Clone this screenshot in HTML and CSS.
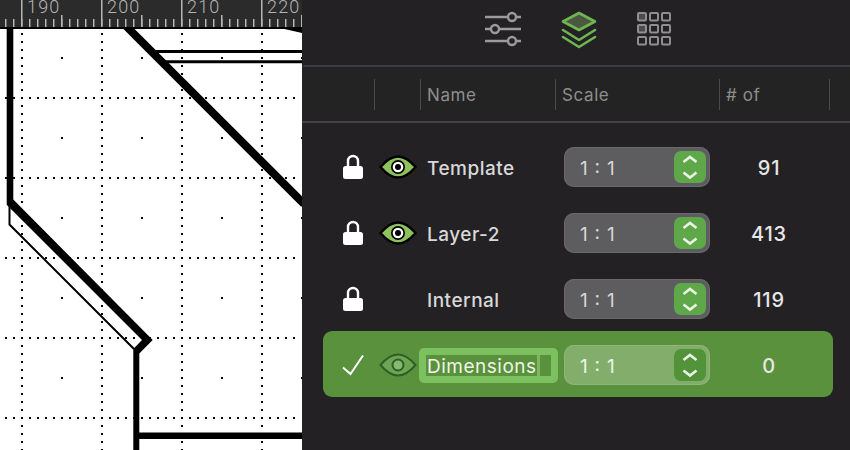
FILE: index.html
```html
<!DOCTYPE html>
<html lang="en">
<head>
    <meta charset="UTF-8">
    <meta name="viewport" content="width=device-width, initial-scale=1.0">
    <title>Layers</title>
    <link rel="stylesheet" href="styles.css">
</head>
<body>

    <div class="app">
        <svg class="drawing" width="302" height="450" viewBox="0 0 302 450">
            <defs>
                <pattern id="centerDots" width="80" height="80" patternUnits="userSpaceOnUse">
                    <rect x="61" y="57" width="2" height="2" fill="#000"/>
                </pattern>
            </defs>

            <rect width="302" height="450" fill="#fff"/>
            <rect y="28" width="302" height="422" fill="url(#centerDots)"/>

            <!-- grid -->
            <g stroke="#000" stroke-width="2" stroke-dasharray="2 6">
                <line x1="22" y1="33" x2="22" y2="450"/>
                <line x1="102" y1="33" x2="102" y2="450"/>
                <line x1="182" y1="33" x2="182" y2="450"/>
                <line x1="262" y1="33" x2="262" y2="450"/>
                <line x1="5" y1="98" x2="296" y2="98"/>
                <line x1="5" y1="178" x2="296" y2="178"/>
                <line x1="5" y1="258" x2="296" y2="258"/>
                <line x1="5" y1="338" x2="296" y2="338"/>
                <line x1="5" y1="418" x2="296" y2="418"/>
            </g>

            <!-- shapes -->
            <polygon points="6.7,28 13.3,28 13.3,199.5 152.7,340 139.3,353.5 139.3,450 133.3,450 133.3,349 142,340 6.7,204.7" fill="#000"/>
            <g fill="none" stroke="#000">
                <polyline points="9.5,204 9.5,224.5 134,349" stroke-width="2"/>
                <line x1="126" y1="26" x2="304" y2="204" stroke-width="8"/>
                <line x1="150" y1="51.5" x2="302" y2="51.5" stroke-width="3"/>
                <line x1="160" y1="61.7" x2="302" y2="61.7" stroke-width="3"/>
                <line x1="136" y1="435.7" x2="302" y2="435.7" stroke-width="6.5"/>
            </g>
            <polygon points="280,28 302,28 302,33" fill="#000"/>

            <!-- ruler -->
            <rect width="302" height="28" fill="#2b2b2b"/>
            <rect y="27" width="302" height="2" fill="#000"/>
            <g stroke="#b5b5b5">
                <line x1="5" y1="23" x2="302" y2="23" stroke-width="8" stroke-dasharray="1.5 6.5"/>
                <line x1="61" y1="21" x2="302" y2="21" stroke-width="12" stroke-dasharray="1.5 78.5"/>
                <line x1="21" y1="13" x2="302" y2="13" stroke-width="26" stroke-dasharray="1.5 78.5"/>
            </g>
            <g class="ruler-text">
                <text x="27" y="12.7">190</text>
                <text x="107" y="12.7">200</text>
                <text x="187" y="12.7">210</text>
                <text x="267" y="12.7">220</text>
            </g>
        </svg>

        <div class="panel">
            <div class="toolbar">
                <svg width="36" height="40" viewBox="0 0 36 40">
                    <g fill="#232124" stroke="#9b9b9b">
                        <path d="M0 8H36M0 20H36M0 32H36" stroke-width="2.6"/>
                        <circle cx="27" cy="8" r="4" stroke-width="2.4"/>
                        <circle cx="10" cy="20" r="4" stroke-width="2.4"/>
                        <circle cx="27" cy="32" r="4" stroke-width="2.4"/>
                    </g>
                </svg>
                <svg width="36" height="40" viewBox="0 0 36 40">
                    <g fill="none" stroke="#6fb552" stroke-width="2.6" stroke-linejoin="round" stroke-linecap="round">
                        <polygon points="18,4 34,12.5 18,21 2,12.5" fill="#4a5840"/>
                        <polyline points="2,21 18,31 34,21"/>
                        <polyline points="2,28 18,38 34,28"/>
                    </g>
                </svg>
                <svg width="36" height="40" viewBox="0 0 36 40">
                    <g fill="none" stroke="#8f8f8f" stroke-width="2">
                        <rect x="1" y="4" width="8" height="7.5" rx="1" fill="#4c4c4c"/>
                        <rect x="13" y="4" width="8" height="7.5" rx="1"/>
                        <rect x="25" y="4" width="8" height="7.5" rx="1"/>
                        <rect x="1" y="16" width="8" height="7.5" rx="1" fill="#4c4c4c"/>
                        <rect x="13" y="16" width="8" height="7.5" rx="1"/>
                        <rect x="25" y="16" width="8" height="7.5" rx="1"/>
                        <rect x="1" y="28" width="8" height="7.5" rx="1"/>
                        <rect x="13" y="28" width="8" height="7.5" rx="1"/>
                        <rect x="25" y="28" width="8" height="7.5" rx="1"/>
                    </g>
                </svg>
            </div>

            <div class="table-head">
                <div class="head-cell col-eye"></div>
                <div class="head-cell col-name">Name</div>
                <div class="head-cell col-scale">Scale</div>
                <div class="head-cell col-count"># of</div>
                <div class="head-cell"></div>
            </div>

            <div class="layers">
                <div class="layer">
                    <div class="lock">
                        <svg width="20" height="26" viewBox="0 0 20 26"><path d="M5 13V7a5 5 0 0 1 10 0v6" fill="none" stroke="#fff" stroke-width="2.4"/><rect y="12" width="20" height="13" rx="2.5" fill="#fff"/></svg>
                    </div>
                    <div class="eye">
                        <svg width="38" height="24" viewBox="0 0 38 24"><path d="M1.5 12C7 5.5 12 1.5 19 1.5S31 5.5 36.5 12C31 18.5 26 22.5 19 22.5S7 18.5 1.5 12Z" fill="#8fc25b" stroke="#000" stroke-width="2.4"/><circle cx="19" cy="12" r="7" fill="#000"/><circle cx="19" cy="12" r="5.3" fill="#fff"/><circle cx="19" cy="12" r="3" fill="#000"/></svg>
                    </div>
                    <div class="name">Template</div>
                    <div class="scale">
                        <span class="scale-value">1 : 1</span>
                        <div class="stepper">
                            <svg width="32" height="32" viewBox="0 0 32 32"><path d="M9.5 11L16 6L22.5 11M9.5 21.5L16 26.5L22.5 21.5" fill="none" stroke="#e9f3e3" stroke-width="2.6"/></svg>
                        </div>
                    </div>
                    <div class="count">91</div>
                </div>

                <div class="layer">
                    <div class="lock">
                        <svg width="20" height="26" viewBox="0 0 20 26"><path d="M5 13V7a5 5 0 0 1 10 0v6" fill="none" stroke="#fff" stroke-width="2.4"/><rect y="12" width="20" height="13" rx="2.5" fill="#fff"/></svg>
                    </div>
                    <div class="eye">
                        <svg width="38" height="24" viewBox="0 0 38 24"><path d="M1.5 12C7 5.5 12 1.5 19 1.5S31 5.5 36.5 12C31 18.5 26 22.5 19 22.5S7 18.5 1.5 12Z" fill="#8fc25b" stroke="#000" stroke-width="2.4"/><circle cx="19" cy="12" r="7" fill="#000"/><circle cx="19" cy="12" r="5.3" fill="#fff"/><circle cx="19" cy="12" r="3" fill="#000"/></svg>
                    </div>
                    <div class="name">Layer-2</div>
                    <div class="scale">
                        <span class="scale-value">1 : 1</span>
                        <div class="stepper">
                            <svg width="32" height="32" viewBox="0 0 32 32"><path d="M9.5 11L16 6L22.5 11M9.5 21.5L16 26.5L22.5 21.5" fill="none" stroke="#e9f3e3" stroke-width="2.6"/></svg>
                        </div>
                    </div>
                    <div class="count">413</div>
                </div>

                <div class="layer">
                    <div class="lock">
                        <svg width="20" height="26" viewBox="0 0 20 26"><path d="M5 13V7a5 5 0 0 1 10 0v6" fill="none" stroke="#fff" stroke-width="2.4"/><rect y="12" width="20" height="13" rx="2.5" fill="#fff"/></svg>
                    </div>
                    <div class="eye"></div>
                    <div class="name">Internal</div>
                    <div class="scale">
                        <span class="scale-value">1 : 1</span>
                        <div class="stepper">
                            <svg width="32" height="32" viewBox="0 0 32 32"><path d="M9.5 11L16 6L22.5 11M9.5 21.5L16 26.5L22.5 21.5" fill="none" stroke="#e9f3e3" stroke-width="2.6"/></svg>
                        </div>
                    </div>
                    <div class="count">119</div>
                </div>

                <div class="layer selected">
                    <div class="lock">
                        <svg width="24" height="24" viewBox="0 0 24 24"><path d="M2 14.5L9.5 21L22 2.5" fill="none" stroke="#fff" stroke-width="2"/></svg>
                    </div>
                    <div class="eye">
                        <svg width="38" height="24" viewBox="0 0 38 24"><path d="M1.5 12C7 5.5 12 1.5 19 1.5S31 5.5 36.5 12C31 18.5 26 22.5 19 22.5S7 18.5 1.5 12Z" fill="#6ea552" stroke="#2f5f28" stroke-width="2"/><circle cx="19" cy="12" r="5.5" fill="#8ab872" stroke="#2f5f28" stroke-width="2"/></svg>
                    </div>
                    <div class="name name-selected">
                        <div class="name-edit"><div class="name-select">Dimensions<span class="caret"></span></div></div>
                    </div>
                    <div class="scale">
                        <span class="scale-value">1 : 1</span>
                        <div class="stepper">
                            <svg width="32" height="32" viewBox="0 0 32 32"><path d="M9.5 11L16 6L22.5 11M9.5 21.5L16 26.5L22.5 21.5" fill="none" stroke="#e9f3e3" stroke-width="2.6"/></svg>
                        </div>
                    </div>
                    <div class="count">0</div>
                </div>
            </div>
        </div>
    </div>

</body>
</html>
```

FILE: styles.css
```css
body {
    margin: 0;
    background: #232124;
    color: #dcdcdc;
    font-family: Inter, "Noto Sans", sans-serif;
    overflow: hidden;
}
.app {
    display: flex;
    width: 850px;
    height: 450px;
}
.drawing {
    display: block;
    flex: none;
}
.ruler-text {
    font-family: Roboto, sans-serif;
    font-weight: 300;
    font-size: 18px;
    letter-spacing: 1.2px;
    fill: #b4b4b4;
}
.panel {
    flex: 1;
    background: #232124;
}
.toolbar {
    display: flex;
    justify-content: center;
    align-items: center;
    gap: 40px;
    box-sizing: border-box;
    height: 67px;
    padding: 0 0 7px 4px;
    border-bottom: 2px solid #3d3c41;
    border-left: 2px solid #232124;
}
.table-head {
    display: flex;
    align-items: center;
    box-sizing: border-box;
    height: 56px;
    padding-left: 72px;
    background: #232323;
    border-bottom: 2px solid #434343;
}
.head-cell {
    box-sizing: border-box;
    height: 31px;
    padding-left: 6px;
    border-left: 1.5px solid #4a4a4a;
    color: #8e8e8e;
    font-size: 17px;
    letter-spacing: 0.6px;
    line-height: 33px;
}
.col-eye {
    width: 46px;
}
.col-name {
    width: 135px;
}
.col-scale {
    width: 164px;
}
.col-count {
    width: 110px;
}
.layers {
    margin: 11px 17px 0 21px;
}
.layer {
    display: grid;
    grid-template-columns: 50px 50px 141px 146px 118px;
    align-items: center;
    box-sizing: border-box;
    height: 66px;
}
.layer.selected {
    margin-top: -1px;
    padding-top: 2px;
    background: #5a913c;
    border-radius: 9px;
}
.lock {
    display: flex;
    justify-content: center;
    padding-left: 10px;
}
.lock svg, .eye svg {
    display: block;
}
.eye {
    display: flex;
    justify-content: center;
}
.name {
    padding: 2px 0 0 4px;
    color: #d8d8d8;
    font-size: 19px;
    font-weight: 500;
    letter-spacing: 0.5px;
}
.name-selected {
    padding-top: 0;
}
.name-edit {
    box-sizing: border-box;
    width: 139px;
    margin-left: -8px;
    padding: 7px;
    background: #7cc05f;
    border-radius: 5px;
}
.name-select {
    height: 21px;
    padding-left: 1px;
    background: #5a913c;
    color: #eef5e8;
    font-weight: 400;
    line-height: 23px;
    white-space: nowrap;
}
.caret {
    display: inline-block;
    width: 3px;
    height: 21px;
    vertical-align: top;
    background: #7cb861;
}
.scale {
    display: flex;
    justify-content: space-between;
    align-items: center;
    box-sizing: border-box;
    height: 40px;
    padding: 0 4px 0 16px;
    background: #5d5c5f;
    border-radius: 10px;
    box-shadow: inset 0 0 0 1px #69686b;
    font-size: 19px;
    word-spacing: 1.5px;
    color: #d6d6d6;
}
.scale-value {
    padding-top: 2px;
}
.stepper {
    width: 32px;
    height: 32px;
    background: #5fa84a;
    border-radius: 7px;
}
.stepper svg {
    display: block;
}
.selected .scale {
    background: #83ad6b;
    box-shadow: inset 0 0 0 1px #8fb578;
    color: #eef5e8;
}
.selected .stepper {
    background: #52933a;
}
.count {
    padding-top: 2px;
    text-align: center;
    font-size: 20px;
    font-weight: 500;
    letter-spacing: 0.8px;
    color: #e6e6e6;
}
```
